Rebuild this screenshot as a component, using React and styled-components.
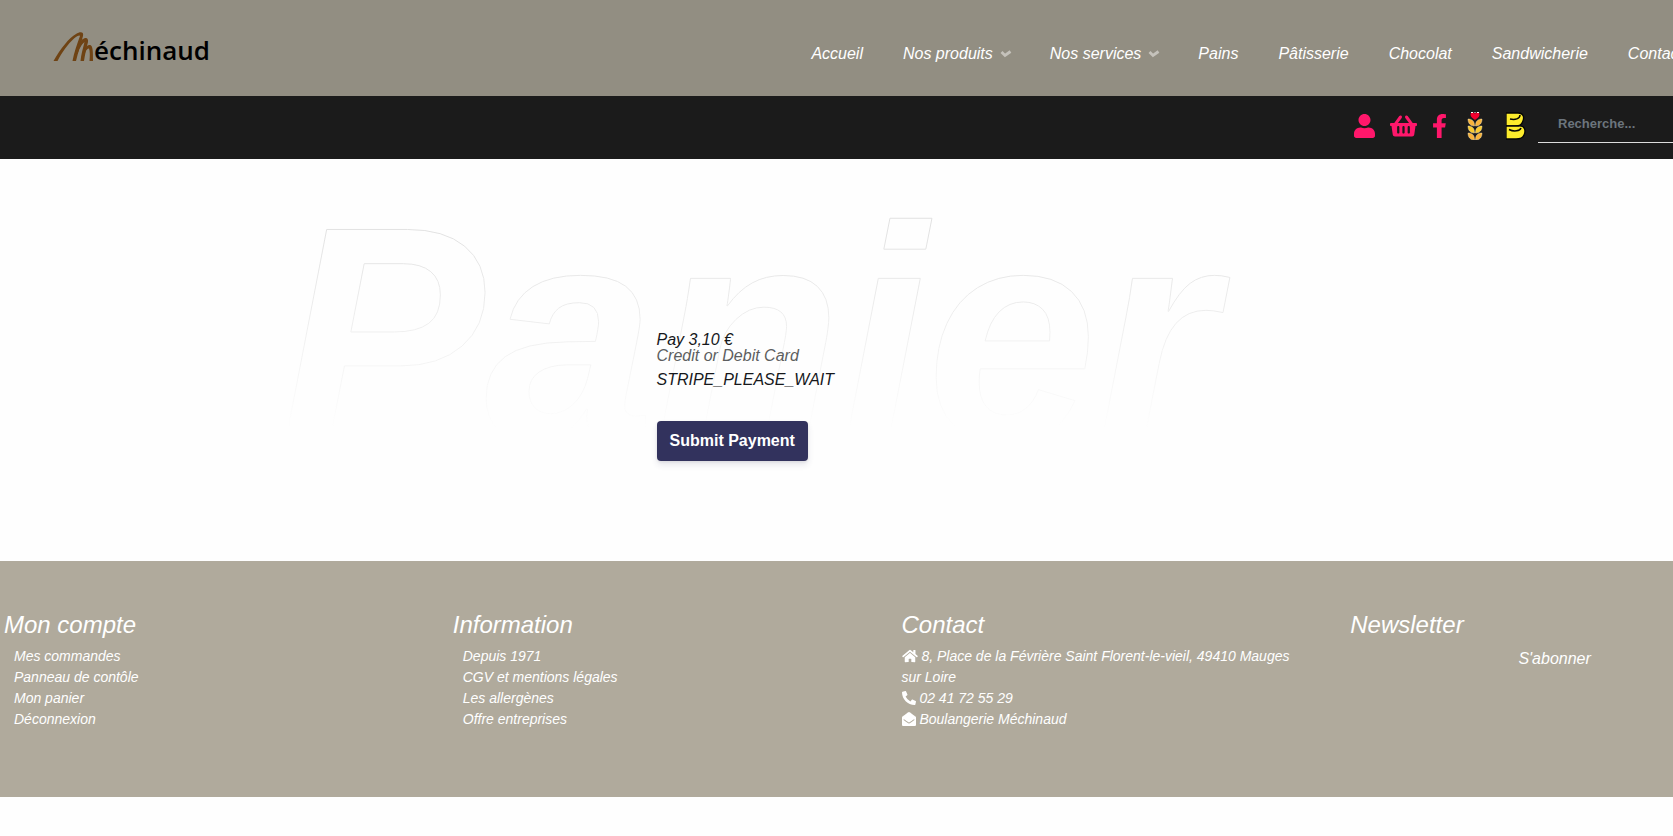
import React from 'react'
import styled, { createGlobalStyle } from 'styled-components'
import { FaUser, FaShoppingBasket, FaFacebookF, FaHome, FaPhoneAlt, FaEnvelopeOpen } from 'react-icons/fa'

const menu = [
  { label: 'Accueil' },
  { label: 'Nos produits', sub: true },
  { label: 'Nos services', sub: true },
  { label: 'Pains' },
  { label: 'Pâtisserie' },
  { label: 'Chocolat' },
  { label: 'Sandwicherie' },
  { label: 'Contact' },
]

const account = ['Mes commandes', 'Panneau de contôle', 'Mon panier', 'Déconnexion']
const information = ['Depuis 1971', 'CGV et mentions légales', 'Les allergènes', 'Offre entreprises']

function Logo() {
  return (
    <Brand href="#">
      <svg width="41" height="34" viewBox="0 0 41 34" fill="#6f4314">
        <path d="M0.500 30C8 17 16 7 23 3C27 0.500 31 0.500 30 5C28 13 25 21 23 30H19.500C21 22 24 13 27 5C27 3.500 24 5 21 7.500C15 13 9 21 4.500 30Z" />
        <path d="M22 22C24 15 27 9 31 7.500C34 6 35.500 8 35 11C33.500 17 32 23 31 30H27.500C28 24 30 17 31.500 11C29 13 26 18 24.500 23Z" />
        <path d="M31 19C33 15 36 13 38 14.500C40 16 40 22 40 30H36.500C37 25 37 20 36 17.500C34.500 17.500 33 19 32 22Z" />
      </svg>
      <span>échinaud</span>
    </Brand>
  )
}

function Chevron() {
  return (
    <svg width="10" height="8" viewBox="0 0 10 8" fill="none" stroke="#c5c2bb" strokeWidth="2.800" overflow="visible">
      <path d="M1.500 2L5 5.500L10.500 1.500" />
    </svg>
  )
}

function WheatIcon() {
  return (
    <svg width="16" height="28" viewBox="0 0 16 28">
      <path fill="#f5002f" d="M8 8C5 6 3.500 4.500 3.500 2.500C3.500 0 7 0 8 2C9 0 12.500 0 12.500 2.500C12.500 4.500 11 6 8 8Z" />
      <path fill="#fff" d="M4 0h2v1H4zM10 0h2v1h-2zM7.500 0h1v1h-1z" />
      {[7, 14, 21].map((y) => (
        <g key={y} fill={y === 14 ? '#f9cb2e' : '#f9b43a'} stroke="#fff3d0" strokeWidth="0.4">
          <path d={`M1 ${y}C5 ${y} 7.500 ${y + 2} 7.500 ${y + 7}C3 ${y + 7} 1 ${y + 4} 1 ${y}Z`} />
          <path d={`M15 ${y}C11 ${y} 8.500 ${y + 2} 8.500 ${y + 7}C13 ${y + 7} 15 ${y + 4} 15 ${y}Z`} />
        </g>
      ))}
    </svg>
  )
}

function BreadIcon() {
  return (
    <svg width="20" height="28" viewBox="0 0 20 28" stroke="#050505" strokeWidth="1.300">
      <path fill="#fdec2c" d="M0 1H12C18 1 18.500 6 16.500 10C15.500 13 13 14 10 14H0Z" />
      <path fill="#fdec2c" d="M0 14H13C19 13.500 20 19 18 23C17 26 14 27 10 27H0Z" />
      <path fill="none" strokeWidth="1.500" d="M4 7C9 8 14 7 14 3M3 17.500C8 20 14 19 15 16" />
    </svg>
  )
}

function App() {
  return (
    <Page>
      <GlobalStyle />
      <Header>
        <Logo />
        <Nav>
          {menu.map((item) => (
            <NavLink key={item.label} href="#">
              {item.label}
              {item.sub && <Chevron />}
            </NavLink>
          ))}
        </Nav>
      </Header>

      <Toolbar>
        <Shortcuts>
          <IconLink href="#" aria-label="Mon compte" $width={21}><FaUser /></IconLink>
          <IconLink href="#" aria-label="Mon panier" $width={27}><FaShoppingBasket /></IconLink>
          <IconLink href="#" aria-label="Facebook" $width={15}><FaFacebookF /></IconLink>
          <Partner href="#" aria-label="Farine"><WheatIcon /></Partner>
          <Partner href="#" aria-label="Boulangerie"><BreadIcon /></Partner>
        </Shortcuts>
        <Search type="search" placeholder="Recherche..." aria-label="Recherche" />
      </Toolbar>

      <Main>
        <Title>Panier</Title>
        <Payment>
          <p>Pay 3,10 €</p>
          <CardLabel>Credit or Debit Card</CardLabel>
          <p>STRIPE_PLEASE_WAIT</p>
          <Submit type="button">Submit Payment</Submit>
        </Payment>
      </Main>

      <Footer>
        <Column>
          <h4>Mon compte</h4>
          <Links>
            {account.map((text) => <li key={text}><a href="#">{text}</a></li>)}
          </Links>
        </Column>
        <Column>
          <h4>Information</h4>
          <Links>
            {information.map((text) => <li key={text}><a href="#">{text}</a></li>)}
          </Links>
        </Column>
        <Column>
          <h4>Contact</h4>
          <address>
            <p><FaHome /> 8, Place de la Févrière Saint Florent-le-vieil, 49410 Mauges sur Loire</p>
            <p><FaPhoneAlt /> 02 41 72 55 29</p>
            <p><FaEnvelopeOpen /> <a href="#">Boulangerie Méchinaud</a></p>
          </address>
        </Column>
        <Column>
          <h4>Newsletter</h4>
          <Subscribe type="button">S'abonner</Subscribe>
        </Column>
      </Footer>
    </Page>
  )
}

const GlobalStyle = createGlobalStyle`
  * {
    box-sizing: border-box;
  }

  body {
    margin: 0;
    background-color: #fefefe;
    color: #16181b;
    font-family: "Liberation Sans", Arial, sans-serif;
    font-size: 16px;
    font-style: italic;
    line-height: 24px;
  }

  h1, h4, p, ul {
    margin: 0;
    padding: 0;
    font-weight: 400;
  }

  a {
    color: inherit;
    text-decoration: none;
  }
`

const Page = styled.div`
  overflow-x: hidden;
`

/* The menu is a little wider than the page and runs off its right side */
const Header = styled.header`
  display: flex;
  justify-content: space-between;
  align-items: center;
  height: 96px;
  margin-right: -30px;
  padding: 0 20px 0 53px;
  background-color: #928e82;
  color: #fff;
`

const Brand = styled.a`
  display: flex;
  align-items: center;
  color: #000;
  font-family: "Open Sans", "Noto Sans", sans-serif;
  font-size: 26px;
  font-style: normal;
  font-weight: 600;
  line-height: 34px;

  span {
    padding-top: 4px;
  }
`

const Nav = styled.nav`
  display: flex;
  gap: 40px;
  padding-top: 12px;
`

const NavLink = styled.a`
  display: flex;
  align-items: center;
  gap: 7px;
  white-space: nowrap;

  &:hover {
    opacity: 0.7;
  }
`

const Toolbar = styled.div`
  display: flex;
  justify-content: flex-end;
  align-items: center;
  height: 63px;
  margin-right: -60px;
  padding-bottom: 8px;
  background-color: #1b1b1b;
`

const Shortcuts = styled.div`
  display: flex;
  align-items: center;
  gap: 15px;
  margin-right: 9px;
  padding-top: 4px;
  color: #ff176b;
  font-size: 24px;
`

const IconLink = styled.a`
  display: flex;

  svg {
    width: ${(props) => props.$width}px;
  }
`

const Partner = styled.a`
  display: flex;
  justify-content: center;
  width: 26px;
`

const Search = styled.input`
  width: 195px;
  height: 38px;
  padding: 0 20px;
  border: none;
  border-bottom: 1px solid #ddd;
  background: transparent;
  color: #fff;
  font-family: inherit;
  font-size: 13px;
  font-weight: 700;
  outline: none;

  &::placeholder {
    color: #6c757d;
    opacity: 1;
  }
`

const Main = styled.main`
  position: relative;
  padding: 169px 0 100px;
`

/* Outlined word that fades out behind the payment form */
const Title = styled.h1`
  position: absolute;
  top: 0;
  left: calc(50% - 556px);
  height: 270px;
  padding-right: 40px;
  overflow: hidden;
  color: transparent;
  font-size: 306px;
  font-weight: 700;
  line-height: 350px;
  -webkit-text-stroke: 1px #d8d8d8;
  mask-image: linear-gradient(#000, transparent);
`

const Payment = styled.form`
  position: relative;
  max-width: 360px;
  margin: 0 auto;
`

const CardLabel = styled.div`
  margin: -4px 0 4px;
  color: #5d5e60;
  line-height: 16px;
`

const Submit = styled.button`
  display: block;
  height: 40px;
  margin-top: 29px;
  padding: 0 13px;
  border: none;
  border-radius: 4px;
  background-color: #32325d;
  box-shadow: 0 4px 6px rgba(50, 50, 93, 0.11), 0 1px 3px rgba(0, 0, 0, 0.08);
  color: #fff;
  font-family: inherit;
  font-size: 16px;
  font-weight: 600;
  cursor: pointer;
`

const Footer = styled.footer`
  display: grid;
  grid-template-columns: repeat(4, 1fr);
  margin-right: -126px;
  padding: 49px 0 67px 4px;
  background-color: #b0aa9c;
  color: #fff;
`

const Column = styled.div`
  padding-right: 40px;
  font-size: 14px;
  line-height: 21px;

  h4 {
    margin-bottom: 7px;
    font-size: 24px;
    line-height: 29px;
  }

  address svg {
    vertical-align: -2px;
  }

  address p:first-child svg {
    width: 16px;
  }
`

const Links = styled.ul`
  padding-left: 10px;
  list-style: none;
`

const Subscribe = styled.button`
  display: block;
  margin: 0 auto;
  padding: 1px 0 0;
  border: none;
  background: transparent;
  color: #fff;
  font-family: inherit;
  font-size: 16px;
  font-style: italic;
  line-height: 24px;
  cursor: pointer;
`

export default App
